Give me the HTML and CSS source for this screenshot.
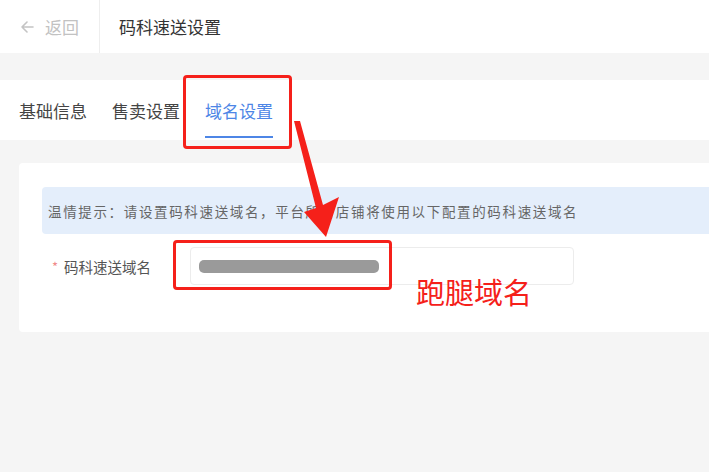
FILE: index.html
```html
<!DOCTYPE html>
<html lang="zh">
<head>
<meta charset="utf-8">
<link rel="stylesheet" href="styles.css">
</head>
<body>
<header class="topbar">
  <div class="back">
    <svg class="back-icon" width="13" height="12" viewBox="0 0 13 12"><path d="M6 1 1 6l5 5M1 6h11" fill="none" stroke="#c4c4c4" stroke-width="1.6" stroke-linecap="round" stroke-linejoin="round"/></svg>
    <span>返回</span>
  </div>
  <div class="title">码科速送设置</div>
</header>

<nav class="tabs">
  <div class="tab">基础信息</div>
  <div class="tab">售卖设置</div>
  <div class="tab active">域名设置</div>
</nav>

<section class="card">
  <div class="alert">温情提示：请设置码科速送域名，平台所有店铺将使用以下配置的码科速送域名</div>
  <div class="form-row">
    <label class="label"><span class="req">*</span>码科速送域名</label>
    <div class="input"><span class="blur"></span></div>
  </div>
</section>

<div class="mark mark-tab"></div>
<div class="mark mark-input"></div>
<div class="note">跑腿域名</div>
<svg class="arrow" width="709" height="472" viewBox="0 0 709 472">
  <polygon points="294,121 300,121 323,205 339,197 326,237 304,212 316,208" fill="#f5201a"/>
</svg>
</body>
</html>
```

FILE: styles.css
```css
* { box-sizing: border-box; }
html, body { margin: 0; padding: 0; }
body {
  width: 709px;
  height: 472px;
  overflow: hidden;
  background: #f5f5f5;
  font-family: "Noto Sans CJK SC", "Noto Sans", sans-serif;
  position: relative;
}
.topbar {
  height: 53px;
  background: #fff;
  display: flex;
  align-items: stretch;
}
.back {
  width: 100px;
  border-right: 1px solid #eeeeee;
  display: flex;
  align-items: center;
  padding-left: 21px;
  gap: 11px;
  color: #c2c2c2;
  font-size: 17px;
}
.title {
  display: flex;
  align-items: center;
  padding-left: 19px;
  font-size: 17px;
  color: #333;
}
.tabs {
  margin-top: 27px;
  height: 60px;
  background: #fff;
  display: flex;
  padding-left: 19px;
  gap: 25px;
}
.tab {
  font-size: 17px;
  color: #444;
  display: flex;
  align-items: center;
  padding-top: 1px;
  position: relative;
}
.tab.active { color: #4d86e6; }
.tab.active::after {
  content: "";
  position: absolute;
  left: 0; right: 0;
  bottom: 2px;
  height: 2px;
  background: #4d86e6;
}
.card {
  margin: 23px 0 0 19px;
  background: #fff;
  border-radius: 4px 0 0 4px;
  padding: 24px 0 47px 23px;
}
.alert {
  height: 47px;
  background: #e4eefb;
  border-radius: 4px 0 0 4px;
  display: flex;
  align-items: center;
  padding-left: 6px;
  font-size: 13.5px;
  letter-spacing: 1.65px;
  color: #666;
  white-space: nowrap;
}
.form-row {
  margin-top: 13px;
  display: flex;
  align-items: center;
  height: 38px;
}
.label {
  width: 148px;
  padding-left: 10px;
  font-size: 14.5px;
  color: #555;
  display: flex;
  align-items: center;
  white-space: nowrap;
}
.req {
  color: #f08a8a;
  font-size: 13px;
  margin-right: 6px;
}
.input {
  width: 384px;
  height: 38px;
  border: 1px solid #ececec;
  border-radius: 4px;
  display: flex;
  align-items: center;
  padding-left: 8px;
}
.blur {
  width: 180px;
  height: 13px;
  border-radius: 5px;
  background: #9a9a9a;
}
.mark {
  position: absolute;
  border: 3px solid #f5201a;
  border-radius: 4px;
}
.mark-tab { left: 183px; top: 75px; width: 109px; height: 74px; }
.mark-input { left: 173px; top: 240px; width: 219px; height: 50px; }
.note {
  position: absolute;
  left: 416px;
  top: 273px;
  font-size: 29px;
  line-height: 36px;
  color: #f5201a;
}
.arrow { position: absolute; left: 0; top: 0; }
```
